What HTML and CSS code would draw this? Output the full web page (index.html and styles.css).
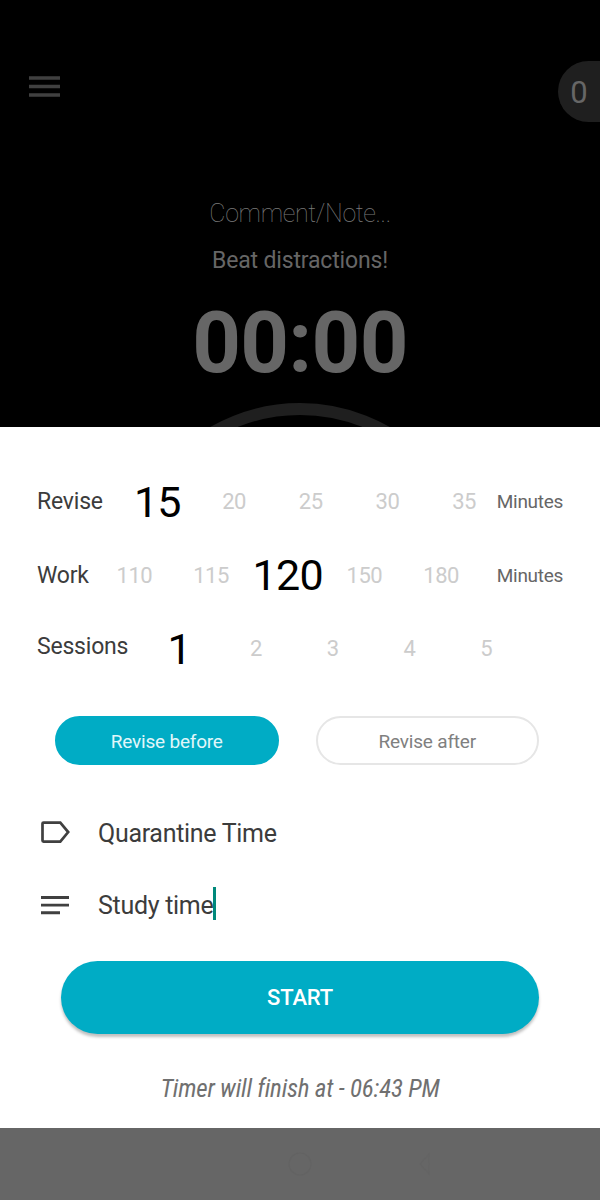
FILE: index.html
```html
<!DOCTYPE html>
<html lang="en">
<head>
    <meta charset="UTF-8">
    <meta name="viewport" content="width=device-width, initial-scale=1.0">
    <title>Focus Timer</title>
    <link rel="stylesheet" href="styles.css">
</head>
<body>
    <div class="timer-screen">
        <div class="topbar">
            <svg class="menu-icon" width="31" height="21" viewBox="0 0 31 21">
                <path d="M0 2h31M0 10.5h31M0 19h31" stroke="#404040" stroke-width="3.4"/>
            </svg>
            <div class="count">0</div>
        </div>
        <p class="note">Comment/Note...</p>
        <p class="slogan">Beat distractions!</p>
        <p class="clock">00:00</p>
        <div class="ring"></div>
    </div>

    <div class="sheet">
        <div class="picker revise">
            <span class="label">Revise</span>
            <div class="values">
                <span class="selected">15</span><span>20</span><span>25</span><span>30</span><span>35</span>
            </div>
            <span class="unit">Minutes</span>
        </div>
        <div class="picker work">
            <span class="label">Work</span>
            <div class="values">
                <span>110</span><span>115</span><span class="selected">120</span><span>150</span><span>180</span>
            </div>
            <span class="unit">Minutes</span>
        </div>
        <div class="picker sessions">
            <span class="label">Sessions</span>
            <div class="values">
                <span class="selected">1</span><span>2</span><span>3</span><span>4</span><span>5</span>
            </div>
        </div>

        <div class="toggle">
            <button class="option active">Revise before</button>
            <button class="option">Revise after</button>
        </div>

        <div class="field">
            <svg class="field-icon" width="30" height="30" viewBox="0 0 30 30">
                <path d="M3.5 4.6H20.3L28.2 14.1L20.3 23.6H3.5Q2.5 23.6 2.5 22.6V5.6Q2.5 4.6 3.5 4.6Z" fill="none" stroke="#404040" stroke-width="2.7"/>
            </svg>
            <span class="field-text">Quarantine Time</span>
        </div>
        <div class="field">
            <svg class="field-icon" width="30" height="30" viewBox="0 0 30 30">
                <path d="M1 7.5h28M1 15.1h28M1 22.7h19" stroke="#404040" stroke-width="2.9"/>
            </svg>
            <span class="field-text">Study time</span><span class="caret"></span>
        </div>

        <button class="start">START</button>
        <p class="finish">Timer will finish at - 06:43 PM</p>
    </div>

    <div class="navbar">
        <svg width="26" height="26" viewBox="0 0 26 26">
            <circle cx="13" cy="13" r="11" fill="none" stroke="#636363" stroke-width="1.2"/>
        </svg>
        <svg width="16" height="26" viewBox="0 0 16 26">
            <path d="M12 3v20L3 13z" fill="none" stroke="#646464" stroke-width="1.2"/>
        </svg>
    </div>
</body>
</html>
```

FILE: styles.css
```css
body {
    font-family: Roboto, sans-serif;
    background-color: #fff;
    margin: 0;
    width: 600px;
    height: 1200px;
    overflow: hidden;
}

p {
    margin: 0;
}

button {
    font-family: inherit;
    border: none;
    padding: 0;
    cursor: pointer;
}

.timer-screen {
    height: 427px;
    background-color: #000;
    color: #666;
    overflow: hidden;
    display: flex;
    flex-direction: column;
    align-items: center;
}

.topbar {
    width: 100%;
    height: 122px;
    display: flex;
    justify-content: space-between;
    flex-shrink: 0;
}

.menu-icon {
    margin: 76px 0 0 29px;
}

.count {
    margin-top: 61px;
    width: 42px;
    height: 61px;
    line-height: 64px;
    font-size: 31px;
    text-align: center;
    background-color: #1f1f1f;
    border-radius: 31px 0 0 31px;
}

.note {
    margin-top: 77px;
    font-size: 25px;
    font-weight: 100;
    line-height: 30px;
    letter-spacing: -0.35px;
    color: #7a7a7a;
}

.slogan {
    margin-top: 17px;
    font-size: 23px;
    line-height: 30px;
    letter-spacing: -0.17px;
}

.clock {
    margin-top: 17px;
    font-size: 85px;
    font-weight: bold;
    line-height: 100px;
    letter-spacing: -0.7px;
}

.ring {
    margin-top: 10px;
    width: 360px;
    height: 360px;
    box-sizing: border-box;
    border: 12px solid #1f1f1f;
    border-radius: 50%;
    flex-shrink: 0;
}

.sheet {
    height: 701px;
    box-sizing: border-box;
    padding-top: 38px;
    background-color: #fff;
}

.picker {
    display: flex;
    align-items: center;
    height: 73.5px;
    padding-left: 37px;
}

.label {
    flex-shrink: 0;
    font-size: 23px;
    letter-spacing: -0.2px;
    color: #3c3c3c;
}

.revise .label {
    width: 82px;
}

.work .label {
    width: 59px;
}

.sessions .label {
    width: 104px;
    margin-top: -5px;
}

.values {
    display: grid;
    grid-template-columns: repeat(5, 76.7px);
    align-items: center;
    flex-shrink: 0;
    margin-right: -20px;
    text-align: center;
    font-size: 22px;
    letter-spacing: -0.5px;
    color: #ccc;
}

.selected {
    font-size: 43px;
    line-height: 50px;
    letter-spacing: -0.7px;
    color: #000;
}

.unit {
    margin-left: auto;
    margin-right: 37px;
    font-size: 19px;
    letter-spacing: -0.3px;
    color: #666;
}

.toggle {
    display: flex;
    gap: 37px;
    margin: 30px 61px 0 55px;
}

.option {
    flex: 1;
    height: 49px;
    box-sizing: border-box;
    border: 2px solid #e6e6e6;
    border-radius: 25px;
    background-color: #fff;
    color: #808080;
    font-size: 19px;
    letter-spacing: -0.2px;
    padding-top: 2px;
}

.option.active {
    background-color: #00acc5;
    border-color: #00acc5;
    color: #e0f7fa;
}

.field {
    display: flex;
    align-items: center;
    height: 72px;
    padding-left: 40px;
    font-size: 25px;
    letter-spacing: -0.3px;
    color: #3c3c3c;
}

.toggle + .field {
    margin-top: 32px;
}

.field-icon {
    margin-right: 28px;
}

.field-text {
    padding-top: 2px;
}

.caret {
    width: 3px;
    height: 33px;
    margin-bottom: 2px;
    background-color: #00897b;
}

.start {
    display: block;
    width: 478px;
    height: 73px;
    margin: 20px 0 0 61px;
    padding-top: 1px;
    border-radius: 37px;
    background-color: #00acc5;
    box-shadow: 0 3px 3px rgba(0, 0, 0, 0.25);
    color: #fff;
    font-size: 22px;
    font-weight: 500;
    letter-spacing: -0.2px;
}

.finish {
    margin-top: 39px;
    text-align: center;
    font-family: "Roboto Condensed", Roboto, sans-serif;
    font-stretch: 75%;
    font-size: 25px;
    font-style: italic;
    line-height: 32px;
    letter-spacing: -0.2px;
    color: #707070;
}

.navbar {
    display: flex;
    align-items: center;
    gap: 104px;
    height: 72px;
    box-sizing: border-box;
    padding-left: 287px;
    background-color: #666;
}
```
